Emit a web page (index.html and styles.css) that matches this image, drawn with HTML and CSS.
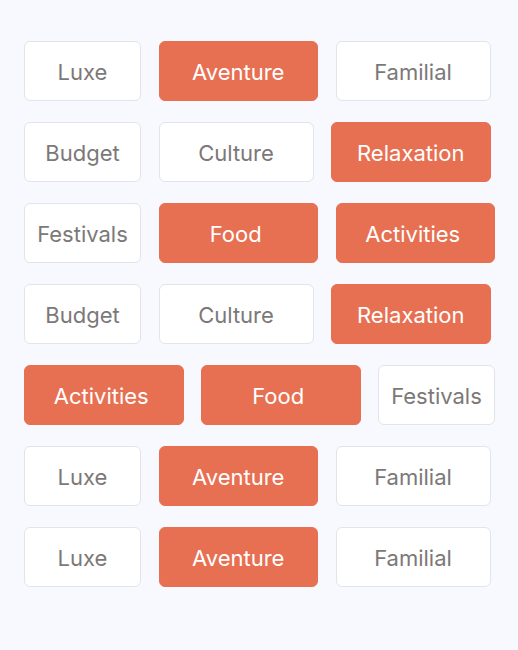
FILE: index.html
```html
<!DOCTYPE html>
<html lang="fr">
<head>
<meta charset="utf-8">
<link rel="stylesheet" href="styles.css">
</head>
<body>
<div class="tags">
  <div class="row"><span class="chip sm">Luxe</span><span class="chip lg on">Aventure</span><span class="chip md">Familial</span></div>
  <div class="row"><span class="chip sm">Budget</span><span class="chip md">Culture</span><span class="chip lg on">Relaxation</span></div>
  <div class="row"><span class="chip sm">Festivals</span><span class="chip lg on off-center">Food</span><span class="chip lg on off-center">Activities</span></div>
  <div class="row"><span class="chip sm">Budget</span><span class="chip md">Culture</span><span class="chip lg on">Relaxation</span></div>
  <div class="row"><span class="chip lg on off-center">Activities</span><span class="chip lg on off-center">Food</span><span class="chip sm">Festivals</span></div>
  <div class="row"><span class="chip sm">Luxe</span><span class="chip lg on">Aventure</span><span class="chip md">Familial</span></div>
  <div class="row"><span class="chip sm">Luxe</span><span class="chip lg on">Aventure</span><span class="chip md">Familial</span></div>
</div>
</body>
</html>
```
FILE: styles.css
```css
html, body {
  margin: 0;
  padding: 0;
  background: #f8f9fe;
}
body {
  font-family: Inter, "Noto Sans", sans-serif;
}
.tags {
  display: flex;
  flex-direction: column;
  gap: 21px;
  padding: 41px 0 0 24px;
}
.row {
  display: flex;
  gap: 17.5px;
}
.chip {
  box-sizing: border-box;
  height: 60px;
  padding-top: 2px;
  display: flex;
  align-items: center;
  justify-content: center;
  border-radius: 6px;
  font-size: 22px;
  color: #7c7878;
  background: #ffffff;
  border: 1.5px solid #e3e4e9;
}
.chip.sm { width: 117px; }
.chip.md { width: 155px; }
.chip.lg { width: 159.5px; }
.chip.on {
  background: #e87052;
  border-color: #e87052;
  color: #ffffff;
}
.chip.off-center {
  padding-right: 5px;
}
```
